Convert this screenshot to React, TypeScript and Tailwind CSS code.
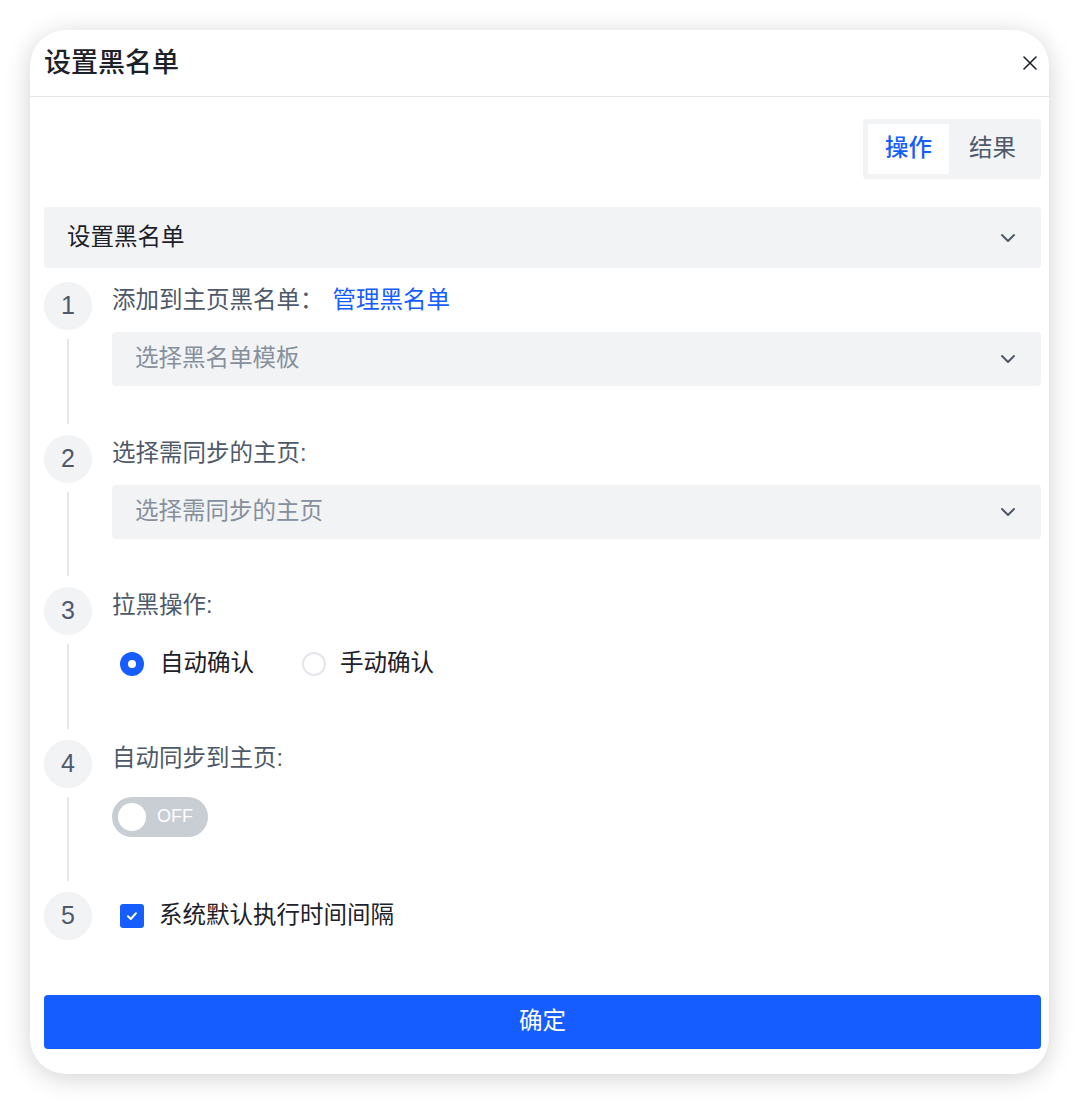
import React from "react";

const Chevron = () => (
  <svg width="16" height="10" viewBox="0 0 16 10" fill="none">
    <path d="M2 2L8 8L14 2" stroke="#4e5969" strokeWidth="2" strokeLinecap="round" strokeLinejoin="round" />
  </svg>
);

const StepCircle = ({ n }: { n: number }) => (
  <div className="w-[48px] h-[48px] rounded-full bg-[#f2f3f5] flex items-center justify-center text-[25px] text-[#4e5969] shrink-0">
    {n}
  </div>
);

const Step = ({
  n,
  label,
  children,
  last,
}: {
  n: number;
  label: React.ReactNode;
  children: React.ReactNode;
  last?: boolean;
}) => (
  <div className="flex">
    <div className="flex flex-col items-center w-[48px] shrink-0">
      <StepCircle n={n} />
      {!last && <div className="w-[2px] flex-1 bg-[#e5e6eb] mt-[9px] mb-[11px]" />}
    </div>
    <div className="flex-1 ml-[20px] pb-[48.5px]">
      <div className="h-[38px] flex items-center text-[23.5px] text-[#4e5969]">{label}</div>
      <div className="mt-[12px] h-[54px] flex items-center">{children}</div>
    </div>
  </div>
);

const Select = ({ placeholder }: { placeholder: string }) => (
  <div className="w-full h-[54px] rounded-[4px] bg-[#f2f3f5] flex items-center justify-between pl-[23px] pr-[25px]">
    <span className="text-[23.5px] text-[#86909c]">{placeholder}</span>
    <Chevron />
  </div>
);

export default function App() {
  return (
    <div className="w-[1080px] h-[1105px] bg-white pt-[30px] pl-[30px] font-['Liberation_Sans','Noto_Sans_CJK_SC',sans-serif]">
      <div className="w-[1019px] h-[1044px] bg-white rounded-[36px] shadow-[0_4px_26px_rgba(0,0,0,0.18)] overflow-hidden flex flex-col">
        {/* header */}
        <div className="h-[67px] border-b-[1.5px] border-[#e5e6eb] flex items-center justify-between pl-[14px] pr-[12px] shrink-0">
          <span className="text-[27px] font-medium text-[#1d2129]">设置黑名单</span>
          <svg width="14" height="14" viewBox="0 0 14 14" fill="none">
            <path d="M1 1L13 13M13 1L1 13" stroke="#1d2129" strokeWidth="1.6" strokeLinecap="round" />
          </svg>
        </div>

        {/* body */}
        <div className="flex-1 flex flex-col pl-[14px] pr-[8px]">
          <div className="flex justify-end mt-[22px]">
            <div className="h-[60px] bg-[#f2f3f5] rounded-[4px] p-[5px] flex">
              <div className="w-[81px] h-[50px] bg-white flex items-center justify-center text-[23.5px] font-medium text-[#165dff]">
                操作
              </div>
              <div className="w-[87px] h-[50px] flex items-center justify-center text-[23.5px] text-[#4e5969]">
                结果
              </div>
            </div>
          </div>

          <div className="mt-[28px] h-[61px] rounded-[4px] bg-[#f2f3f5] flex items-center justify-between pl-[23px] pr-[25px]">
            <span className="text-[23.5px] text-[#1d2129]">设置黑名单</span>
            <Chevron />
          </div>

          <div className="mt-[14px] flex flex-col">
            <Step
              n={1}
              label={
                <>
                  <span>添加到主页黑名单：</span>
                  <span className="text-[#165dff] ml-[9px]">管理黑名单</span>
                </>
              }
            >
              <Select placeholder="选择黑名单模板" />
            </Step>
            <Step n={2} label="选择需同步的主页:">
              <Select placeholder="选择需同步的主页" />
            </Step>
            <Step n={3} label="拉黑操作:">
              <div className="flex items-center pl-[8px] text-[23.5px] text-[#1d2129]">
                <div className="flex items-center">
                  <div className="w-[24px] h-[24px] rounded-full bg-[#165dff] flex items-center justify-center">
                    <div className="w-[8px] h-[8px] rounded-full bg-white" />
                  </div>
                  <span className="ml-[16px]">自动确认</span>
                </div>
                <div className="flex items-center ml-[48px]">
                  <div className="w-[24px] h-[24px] rounded-full border-2 border-[#e5e6eb] bg-white" />
                  <span className="ml-[14px]">手动确认</span>
                </div>
              </div>
            </Step>
            <Step n={4} label="自动同步到主页:">
              <div className="w-[96px] h-[40px] rounded-full bg-[#c9cdd4] flex items-center pl-[6px]">
                <div className="w-[28px] h-[28px] rounded-full bg-white" />
                <span className="ml-[11px] text-[18px] text-white">OFF</span>
              </div>
            </Step>
            <div className="flex items-center">
              <StepCircle n={5} />
              <div className="ml-[28px] flex items-center">
                <div className="w-[24px] h-[24px] rounded-[3px] bg-[#165dff] flex items-center justify-center">
                  <svg width="14" height="14" viewBox="0 0 14 14" fill="none">
                    <path d="M3 7.2L5.8 10L11 4.2" stroke="white" strokeWidth="2" strokeLinecap="round" strokeLinejoin="round" />
                  </svg>
                </div>
                <span className="ml-[15px] text-[23.5px] text-[#1d2129]">系统默认执行时间间隔</span>
              </div>
            </div>
          </div>

          <div className="mt-auto mb-[25px] h-[54px] rounded-[4px] bg-[#165dff] flex items-center justify-center text-[23.5px] text-white">
            确定
          </div>
        </div>
      </div>
    </div>
  );
}
